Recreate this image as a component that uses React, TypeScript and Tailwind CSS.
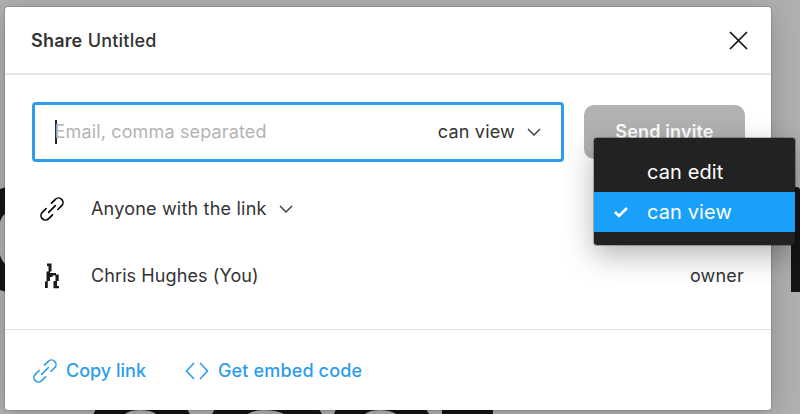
import React from "react";

function LinkIcon({ className }: { className?: string }) {
  return (
    <svg width="26" height="26" viewBox="-13 -13 26 26" className={className} fill="none" stroke="currentColor" strokeWidth="1.6" strokeLinecap="round">
      <g transform="rotate(-45)">
        <path d="M3.8 -4.5H9.2a4.5 4.5 0 0 1 0 9H3.8M-3.8 -4.5H-9.2a4.5 4.5 0 0 0 0 9H-3.8M-4.7 0H4.7" />
      </g>
    </svg>
  );
}

function Chevron() {
  return (
    <svg width="14" height="8" viewBox="0 0 14 8" fill="none" stroke="#444" strokeWidth="1.5">
      <path d="M1 1l6 6 6-6" />
    </svg>
  );
}

function Backdrop() {
  return (
    <svg width="800" height="414" viewBox="0 0 800 414" className="absolute inset-0" fill="#151515">
      <path d="M0 189L6 187V213C3 215 1 218 0 222ZM0 255C1 259 3 262 6 265V292L0 290Z" />
      <path d="M791 187h5q4 0 4 3v102h-9z" />
      <path d="M93.500 414L96 409H187L190 414H156Q151 410 140 410Q130 410 125 414Z" />
      <path d="M212 414L215 409H319L322 414H284Q276 410 264 410Q254 410 248 414Z" />
      <path d="M334 414L336 409H426L429 414H396Q390 410 380 410Q370 410 365 414Z" />
      <path d="M442 408h51v6h-51z" />
    </svg>
  );
}

export default function App() {
  return (
    <div className="relative h-[414px] w-[800px] overflow-hidden bg-[#b0b0b0] pl-[5px] pt-[7px] font-['Inter',sans-serif] text-[18px] leading-6 text-[#333]">
      <Backdrop />
      <div className="relative flex h-[403px] w-[766px] flex-col rounded-[3px] bg-white shadow-[0_0_0_1px_rgba(0,0,0,0.12),0_4px_28px_rgba(0,0,0,0.2)]">
        <header className="flex h-[68px] shrink-0 items-center justify-between border-b-2 border-[#e5e5e5] pl-[26px] pr-[23px] pt-px">
          <h1 className="whitespace-nowrap tracking-[0.2px]">
            <span className="font-semibold">Share</span> <span className="font-medium">Untitled</span>
          </h1>
          <svg width="19" height="19" viewBox="0 0 19 19" fill="none" stroke="#111" strokeWidth="1.7">
            <path d="M1 1l17 17M18 1L1 18" />
          </svg>
        </header>

        <main className="flex h-[254px] shrink-0 flex-col pl-[27px] pr-[27px] pt-[27px]">
          <div className="flex items-center gap-5">
            <div className="flex h-[60px] w-[532px] shrink-0 items-center rounded-[4px] border-3 border-[#2d9ced] pl-5 pr-5">
              <span className="h-6 w-[1.500px] bg-[#222]" />
              <span className="-ml-[2px] flex-1 tracking-[0.15px] text-[#b3b3b3]">Email, comma separated</span>
              <span className="mr-3 tracking-[0.2px]">can view</span>
              <Chevron />
            </div>
            <button className="h-[54px] w-[161px] shrink-0 rounded-[10px] bg-[#b2b2b2] pb-px font-semibold tracking-[0.15px] text-white">Send invite</button>
          </div>
          <div className="mt-[34px] flex h-[26px] items-center">
            <LinkIcon className="ml-[6.500px] text-black" />
            <span className="ml-[26.500px] mr-[12px] tracking-[0.2px]">Anyone with the link</span>
            <Chevron />
          </div>
          <div className="mt-[41px] flex h-[26px] items-center">
            <svg width="16" height="26" viewBox="0 0 16 26" className="ml-3" fill="#1a1a1a">
              <path d="M3 0.500H7.500V8.500H6V10H12V11.500H14.700V18H13V23H15V25.300H9.500V18H11.500V12.500H8.500V14H6V18H3.800V25H1V18.500H2.500V8.500H4.500V3H3Z" />
            </svg>
            <span className="ml-[31px] flex-1 tracking-[0.1px]">Chris Hughes (You)</span>
            <span className="tracking-[0.2px]">owner</span>
          </div>
        </main>

        <footer className="flex flex-1 items-center border-t border-[#dfdfdf] pl-[27px] pt-px font-medium text-[#2d9ced]">
          <LinkIcon />
          <span className="ml-2">Copy link</span>
          <svg width="24" height="18" viewBox="0 0 24 18" className="ml-[39px]" fill="none" stroke="currentColor" strokeWidth="1.6">
            <path d="M9 1L1.500 9L9 17M15 1L22.500 9L15 17" />
          </svg>
          <span className="ml-[9px] tracking-[0.15px]">Get embed code</span>
        </footer>
      </div>

      <div className="absolute left-[594px] top-[138px] h-[107px] w-[201px] rounded-[3px] bg-[#222] pt-[14px] text-[20px] tracking-[0.1px] text-white shadow-[0_0_0_1px_rgba(0,0,0,0.25),0_10px_30px_rgba(0,0,0,0.3)]">
        <div className="flex h-10 items-center pl-[53px]">can edit</div>
        <div className="flex h-10 items-center bg-[#18a0fb] pl-5">
          <svg width="14" height="11" viewBox="0 0 14 11" fill="none" stroke="white" strokeWidth="2.6">
            <path d="M1 5l4 4 8-8" />
          </svg>
          <span className="ml-[19px]">can view</span>
        </div>
      </div>
    </div>
  );
}
